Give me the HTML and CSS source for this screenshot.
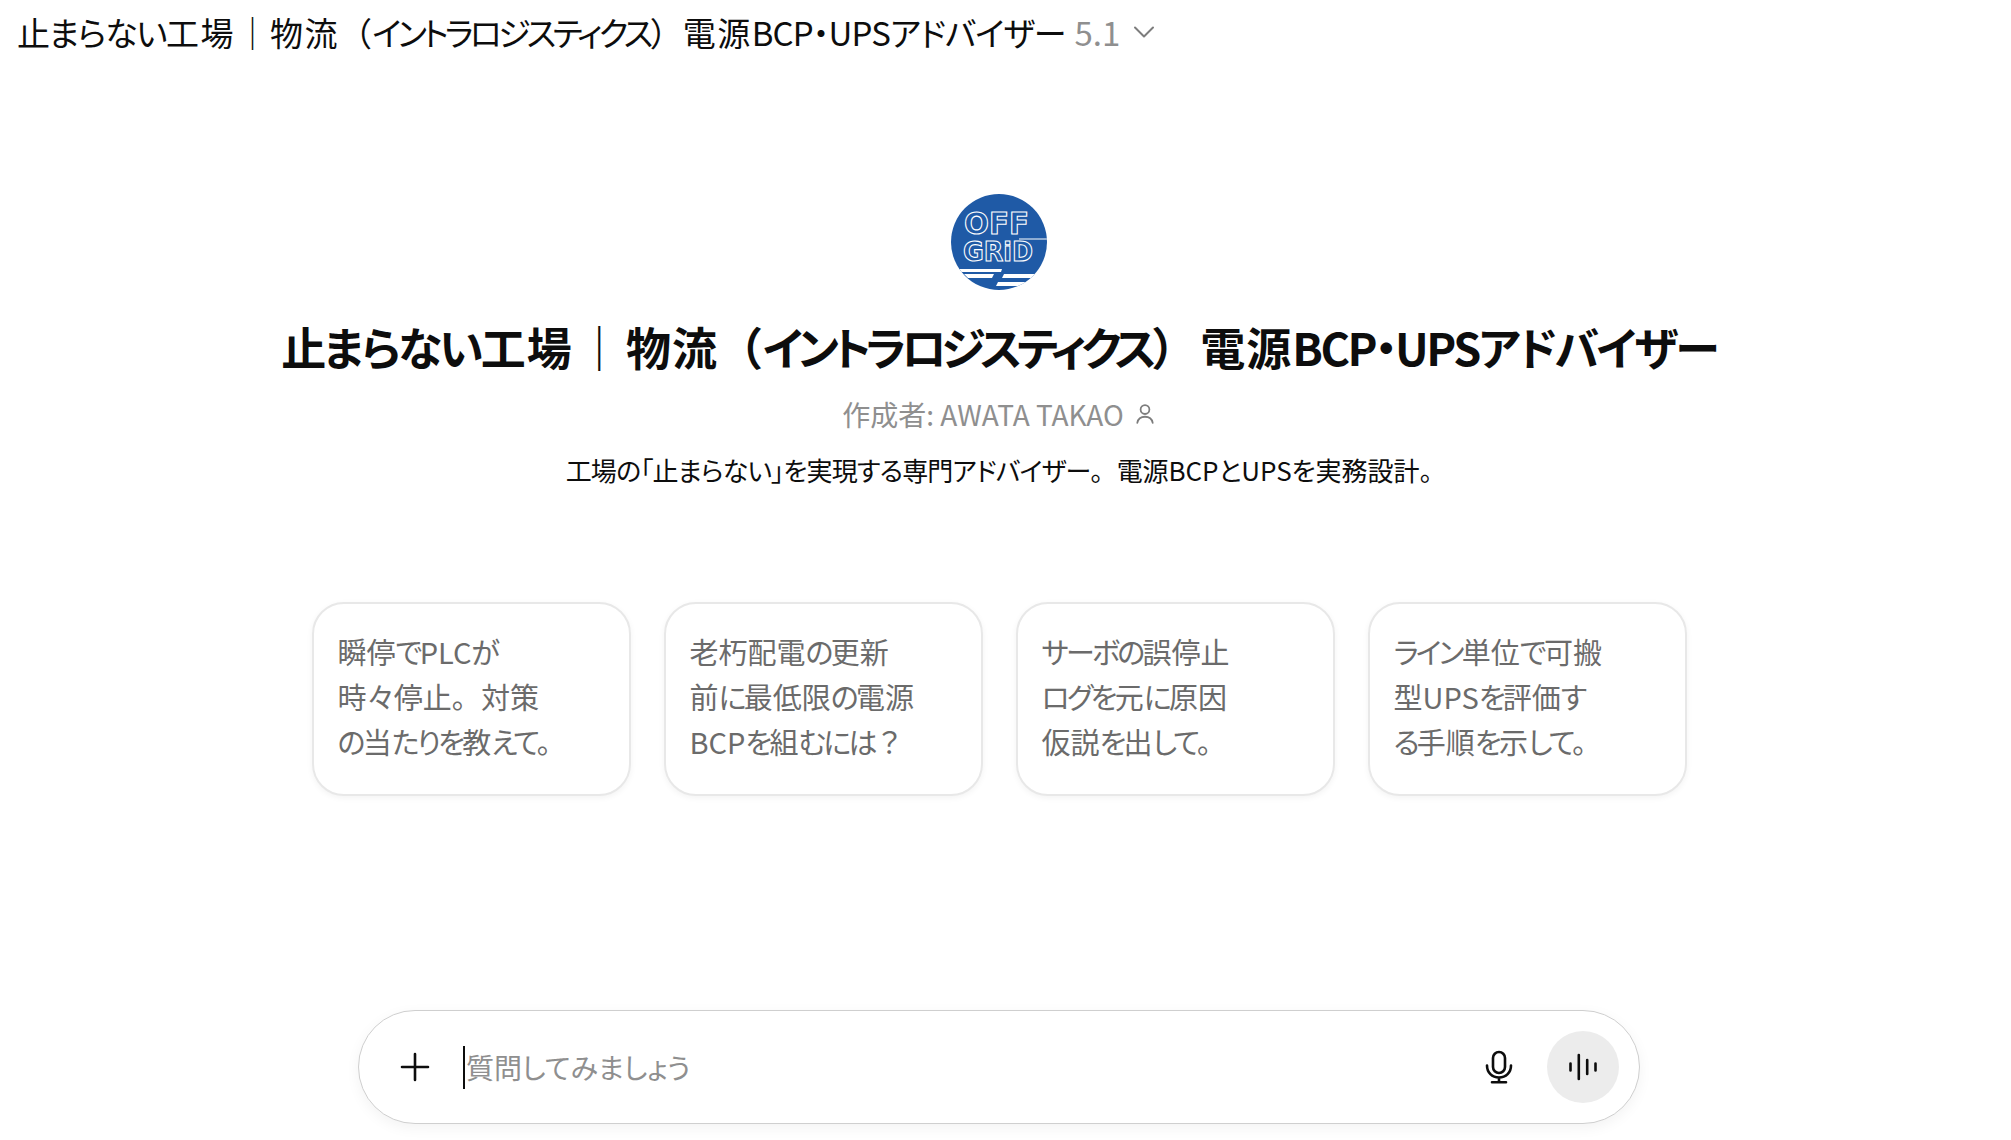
FILE: index.html
```html
<!DOCTYPE html>
<html lang="ja">
<head>
<meta charset="utf-8">
<title>止まらない工場｜物流（イントラロジスティクス）電源BCP・UPSアドバイザー</title>
<link rel="stylesheet" href="styles.css">
</head>
<body>
<div class="page">
  <header class="topbar">
    <span class="topbar-title heading-text"><span class="hd-a">止まらない</span><span class="kj">工場</span><span class="fw bar">｜</span><span class="kj">物流</span><span class="fw open">（</span><span class="ka">イントラロジスティクス</span><span class="fw close">）</span><span class="kj">電源</span>BCP・UPS<span class="ka2">アドバイザー</span></span>
    <span class="topbar-version">5.1</span>
    <svg class="chevron" width="24" height="24" viewBox="0 0 24 24" fill="none" stroke="#7d7d7d" stroke-width="2" stroke-linecap="round" stroke-linejoin="round"><path d="M3 7.500l9 9 9-9"/></svg>
  </header>
  <main class="main">
    <svg class="logo" width="96" height="96" viewBox="0 0 96 96">
      <defs><clipPath id="logo-clip"><circle cx="48" cy="48" r="48"/></clipPath></defs>
      <g clip-path="url(#logo-clip)">
        <rect width="96" height="96" fill="#1f5aa6"/>
        <text class="logo-text"><tspan x="13" y="40" textLength="65" lengthAdjust="spacingAndGlyphs">OFF</tspan><tspan class="logo-text-small" x="12" y="67" textLength="70" lengthAdjust="spacingAndGlyphs">GRiD</tspan></text>
        <path d="M68 45H96" stroke="#fff" stroke-width="1" fill="none"/>
        <path d="M8 75H51l-1 3H10zM13 80H43l-2 4H17zM53 80H91l-2 4H51zM47 88H83l-3 4H45z" fill="#fff"/>
      </g>
    </svg>
    <h1 class="title heading-text"><span class="hd-a">止まらない</span><span class="kj">工場</span><span class="fw bar">｜</span><span class="kj">物流</span><span class="fw open">（</span><span class="ka">イントラロジスティクス</span><span class="fw close">）</span><span class="kj">電源</span>BCP・UPS<span class="ka2">アドバイザー</span></h1>
    <p class="author">作成者: AWATA TAKAO
      <svg class="person" width="22" height="22" viewBox="0 0 20 20" fill="none" stroke="#7d7d7d" stroke-width="1.600" stroke-linecap="round"><circle cx="10" cy="6" r="4"/><path d="M3 18c.8-4 3.200-5.500 7-5.500s6.200 1.500 7 5.500"/></svg>
    </p>
    <p class="desc"><span class="dense">工場の「止まらない」を実現する専門アドバイザー</span><span class="fw">。</span>電源BCPとUPSを実務設計。</p>
    <div class="cards">
      <button class="card">瞬停<span class="ka">で</span>PLC<span class="ka">が</span><br>時々停止<span class="fw">。</span>対策<br><span class="ka">の</span>当<span class="ka">たりを</span>教<span class="ka">えて。</span></button>
      <button class="card">老朽配電<span class="ka">の</span>更新<br>前<span class="ka">に</span>最低限<span class="ka">の</span>電源<br>BCP<span class="ka">を</span>組<span class="ka">むには</span><span class="fw">？</span></button>
      <button class="card"><span class="ka">サーボの</span>誤停止<br><span class="ka">ログを</span>元<span class="ka">に</span>原因<br>仮説<span class="ka">を</span>出<span class="ka">して。</span></button>
      <button class="card"><span class="ka">ライン</span>単位<span class="ka">で</span>可搬<br>型UPS<span class="ka">を</span>評価<span class="ka">す</span><br><span class="ka">る</span>手順<span class="ka">を</span>示<span class="ka">して。</span></button>
    </div>
    <div class="composer">
      <svg class="plus" width="32" height="32" viewBox="0 0 32 32" fill="none" stroke="#0d0d0d" stroke-width="2.600" stroke-linecap="round"><path d="M16 3v26M3 16h26"/></svg>
      <span class="caret"></span>
      <span class="placeholder">質問してみましょう</span>
      <svg class="mic" width="28" height="34" viewBox="0 0 28 34" fill="none" stroke="#0d0d0d" stroke-width="2.600" stroke-linecap="round"><rect x="8" y="2" width="12" height="21" rx="6"/><path d="M2 15.500c0 7 5 12 12 12s12-5 12-12M14 27.500v4.500M7 32.300h14"/></svg>
      <span class="voice">
        <svg width="30" height="28" viewBox="0 0 30 28" fill="none" stroke="#0d0d0d" stroke-width="2.600" stroke-linecap="round"><path d="M2.500 10.500v7M10.800 2v24M19.200 7v14M27.500 10.500v7"/></svg>
      </span>
    </div>
  </main>
</div>
</body>
</html>
```
FILE: styles.css
```css
* { box-sizing: border-box; }
html, body { margin: 0; height: 100%; background: #fff; }
body {
  font-family: "Noto Sans CJK JP", "Noto Sans", sans-serif;
  font-feature-settings: "palt";
  color: #0d0d0d;
  overflow: hidden;
}
.fw { font-feature-settings: normal; letter-spacing: 0; }
.page { height: 1140px; display: flex; flex-direction: column; }
.topbar { height: 64px; padding-left: 17px; display: flex; align-items: center; flex: none; }
.topbar-title { font-size: 33px; letter-spacing: -0.8px; white-space: nowrap; }
.topbar-title .kj { letter-spacing: 1.500px; }
.topbar-title .hd-a { letter-spacing: -1.300px; }
.topbar-title .bar { margin: 0 1px; }
.topbar-title .ka { letter-spacing: -3.700px; }
.topbar-title .ka2 { letter-spacing: -1px; }
.topbar-title .close { margin-right: 0; }
.topbar-version { font-size: 33px; color: #8f8f8f; margin-left: 9px; }
.chevron { margin-left: 12px; }
.main { flex: 1; display: flex; flex-direction: column; align-items: center; padding-top: 130px; padding-bottom: 16px; }
.logo { display: block; flex: none; margin-left: -13px; }
.logo-text { font-family: "DejaVu Sans", sans-serif; font-weight: 700; font-size: 30px; fill: none; stroke: #fff; stroke-width: 1.100; font-feature-settings: normal; }
.logo-text-small { font-size: 27px; }
.title { margin: 23px 0 0; font-size: 45px; letter-spacing: -2.500px; line-height: 68px; font-weight: 700; white-space: nowrap; margin-left: -13px; }
.title .kj { letter-spacing: 1px; }
.title .hd-a { letter-spacing: -2.800px; }
.title .bar { margin: 0 4px; }
.title .ka { letter-spacing: -5.500px; }
.title .ka2 { letter-spacing: -2.800px; }
.title .close { margin-right: 4px; }
.author { margin: 13px 0 0; font-size: 28px; line-height: 40px; color: #8f8f8f; display: flex; align-items: center; gap: 10px; margin-left: -13px; }
.desc { margin: 16px 0 0; font-size: 26px; letter-spacing: -0.050px; line-height: 40px; margin-left: -13px; }
.desc .dense { letter-spacing: -0.800px; }
.cards { margin-top: 112px; display: grid; grid-template-columns: repeat(4, 319px); gap: 33px; margin-left: -13px; }
.card {
  height: 194px; padding: 18px 24px 24px; text-align: left;
  font: inherit; font-size: 29px; letter-spacing: 0; line-height: 45px; color: #6b6b6b;
  background: #fff; border: 2px solid #e8e8e8; border-radius: 32px;
  box-shadow: 0 2px 6px rgba(0,0,0,.05);
  white-space: nowrap;
}
.card .ka { letter-spacing: -2.700px; }
.composer {
  margin-top: auto; width: 1282px; height: 114px; margin-left: -13px;
  display: flex; align-items: center; padding: 0 20px 0 40px;
  background: #fff; border: 1.500px solid #cfcfcf; border-radius: 57px;
  box-shadow: 0 4px 14px rgba(0,0,0,.05);
}
.plus { flex: none; }
.caret { width: 2px; height: 43px; background: #0d0d0d; margin-left: 32px; flex: none; }
.placeholder { font-size: 28px; color: #8f8f8f; margin-left: 1px; flex: 1; }
.mic { flex: none; margin-right: 34px; }
.voice { width: 72px; height: 72px; border-radius: 50%; background: #ececec; display: flex; align-items: center; justify-content: center; flex: none; }
```
